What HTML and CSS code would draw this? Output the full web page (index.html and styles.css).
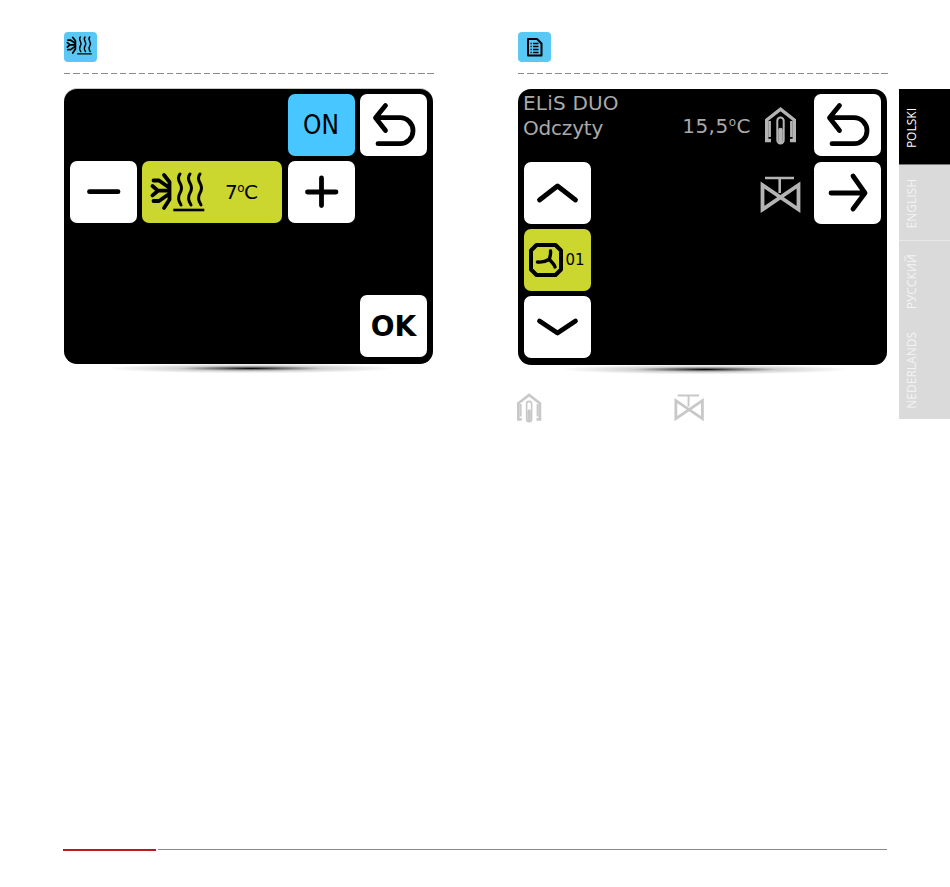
FILE: index.html
```html
<!DOCTYPE html>
<html lang="pl">
<head>
<meta charset="utf-8">
<title>ELiS DUO</title>
<link rel="stylesheet" href="styles.css">
</head>
<body>
<svg class="sprite" xmlns="http://www.w3.org/2000/svg">
  <symbol id="frost" viewBox="0 0 60 50">
    <g fill="none" stroke="#000" stroke-linecap="round" stroke-linejoin="round">
      <path stroke-width="3.800" d="M17 8l5.500 7v17.500L17 41M10 23.700h12.500M5.500 19l5.500 4.700-5.500 4.700M6.500 13.500h5.500l10 7M6.500 34h5.500l10-7"/>
      <path stroke-width="3" d="M33 7c-2.500 3-2 5.500 0 9s2.500 6 0 10-1.500 8 1 12M43 7c-2.500 3-2 5.500 0 9s2.500 6 0 10-1.500 8 1 12M53 7c-2.500 3-2 5.500 0 9s2.500 6 0 10-1.500 8 1 12"/>
      <path stroke-width="2.600" stroke-linecap="butt" d="M26.300 43h31"/>
    </g>
  </symbol>
  <symbol id="sensor" viewBox="0 0 32 38">
    <g fill="none" stroke="currentColor">
      <path stroke-width="3.400" d="M6 33.500H1.700V13L15.500 2.200 29.300 13v20.500H25"/>
      <path stroke-width="2.600" d="M4.600 14V30M26.400 14V30"/>
      <rect x="12.300" y="10.500" width="6.400" height="26" rx="3.200" stroke-width="2"/>
      <path stroke-width="4.500" stroke-linecap="round" d="M15.500 23v11"/>
    </g>
  </symbol>
  <symbol id="valve" viewBox="0 0 42 38">
    <g fill="none" stroke="currentColor" stroke-width="3.800">
      <path stroke-width="2.600" d="M5 2h29M19.700 2v15"/>
      <path d="M2.500 9L38.500 33.500V9L2.500 33.500z"/>
    </g>
  </symbol>
  <symbol id="back" viewBox="0 0 67 62">
    <path d="M25.500 11.500L15.500 23.700 25.500 36.500M16 23.700H40a13 13 0 0 1 0 26H18"/>
  </symbol>
</svg>
<div class="page">
  <div class="content">
    <section class="column">
      <div class="head-icon">
        <svg viewBox="-1.700 -3.600 70.200 63.800" width="33" height="30"><use href="#frost" width="60" height="50"/></svg>
      </div>
      <div class="dashes"></div>
      <div class="screen screen-left">
        <div class="btn btn-blue on cell-on">ON</div>
        <div class="btn cell-back">
          <svg class="ico"><use href="#back"/></svg>
        </div>
        <div class="btn cell-minus">
          <svg class="ico" viewBox="0 0 67 62"><path d="M19.500 30.700H48"/></svg>
        </div>
        <div class="btn-green cell-temp">
          <svg class="frost" width="60" height="50"><use href="#frost"/></svg>
          <span class="temp">7<sup>o</sup>C</span>
        </div>
        <div class="btn cell-plus">
          <svg class="ico" viewBox="0 0 67 62"><path d="M19.500 31H48M33.500 17V44.500"/></svg>
        </div>
        <div class="btn ok cell-ok">OK</div>
      </div>
      <div class="shadow"></div>
    </section>

    <section class="column">
      <div class="head-icon">
        <svg viewBox="0 0 33 30" width="33" height="30" fill="none" stroke="#000">
          <path d="M10 7h9l4.500 4.500V23.500H10z" stroke-width="2" stroke-linejoin="round"/>
          <path d="M12.500 11.500h1.200M15 11.500h5.500M12.500 14.500h1.200M15 14.500h5.500M12.500 17.500h1.200M15 17.500h5.500M12.500 20.500h1.200M15 20.500h5.500" stroke-width="1.300"/>
        </svg>
      </div>
      <div class="dashes"></div>
      <div class="screen screen-right">
        <div class="title cell-title">ELiS DUO<br><span class="title-sub">Odczyty</span></div>
        <div class="reading cell-reading">
          <span>15,5<sup>o</sup>C</span>
          <svg class="sensor" width="32" height="38"><use href="#sensor"/></svg>
        </div>
        <div class="btn cell-back">
          <svg class="ico"><use href="#back"/></svg>
        </div>
        <div class="btn cell-up">
          <svg class="ico" viewBox="0 0 67 62"><path d="M15.500 38L33.500 24 51.500 38"/></svg>
        </div>
        <svg class="valve cell-valve" width="42" height="38"><use href="#valve"/></svg>
        <div class="btn cell-next">
          <svg class="ico" viewBox="0 0 67 62"><path d="M17 31H50.500M39 14L51 31 39 47"/></svg>
        </div>
        <div class="btn-green cell-fan">
          <svg viewBox="0 0 34 34" width="34" height="34" fill="none" stroke="#000">
            <path d="M7.500 2H26.500L32 7.500V26.500L26.500 32H7.500L2 26.500V7.500z" stroke-width="4" stroke-linejoin="round"/>
            <path d="M20.300 16.500C21 13.500 22 11 21.500 8M19.800 16.500C16 19 12.500 19.500 8.500 19M20.300 16.500C23 19 25 21 26 24" stroke-width="3.400" stroke-linecap="round"/>
          </svg>
          <span class="fan-num">01</span>
        </div>
        <div class="btn cell-down">
          <svg class="ico" viewBox="0 0 67 62"><path d="M15.500 25L33.500 37 51.500 25"/></svg>
        </div>
      </div>
      <div class="shadow"></div>
      <div class="legend">
        <svg class="legend-sensor" width="25" height="30"><use href="#sensor"/></svg>
        <svg class="legend-valve" width="31" height="28"><use href="#valve"/></svg>
      </div>
    </section>
    <nav class="tabs">
      <a class="tab tab-polski"><span>POLSKI</span></a>
      <a class="tab tab-english"><span>ENGLISH</span></a>
      <a class="tab tab-russian"><span>РУССКИЙ</span></a>
      <a class="tab tab-dutch"><span>NEDERLANDS</span></a>
    </nav>
  </div>
  <footer class="rule">
    <div class="rule-red"></div>
    <div class="rule-grey"></div>
  </footer>
</div>
</body>
</html>
```
FILE: styles.css
```css
* { box-sizing: border-box; }
html, body { margin: 0; padding: 0; background: #fff; }
body { font-family: "DejaVu Sans", Verdana, sans-serif; }

.sprite { display: none; }

.page {
  display: flex;
  flex-direction: column;
  height: 887px;
  overflow: hidden;
}
.content {
  display: flex;
  flex: 1;
  padding: 32px 0 0 64px;
}
.column { width: 370px; margin-right: 84px; }
.column + .column { margin-right: 11px; }

.head-icon {
  width: 33px;
  height: 30px;
  background: #5ac8f5;
  border-radius: 4px;
  overflow: hidden;
}
.head-icon svg { display: block; }

.dashes {
  height: 1px;
  margin-top: 11px;
  background: repeating-linear-gradient(to right, #8c8c8c 0 6.500px, transparent 6.500px 9.320px);
}

.screen {
  display: grid;
  grid-template-columns: 67px 140px 67px 67px;
  grid-auto-rows: 62px;
  column-gap: 5.500px;
  width: 369px;
  margin-top: 15px;
  padding-left: 5.500px;
  background: #000;
  border-radius: 13px;
}
.screen-left {
  height: 275px;
  padding-top: 5px;
  row-gap: 5px;
  box-shadow: 0 -1px 0 #c8c8c8;
}
.screen-right {
  height: 276px;
  padding-top: 5.300px;
  row-gap: 5.400px;
}

.btn {
  display: flex;
  align-items: center;
  justify-content: center;
  background: #fff;
  border-radius: 7px;
  color: #000;
}
.btn-blue { background: #48c6ff; }
.btn-green {
  display: flex;
  align-items: center;
  background: #cbd62e;
  border-radius: 7px;
  color: #000;
}
.ico {
  display: block;
  width: 67px;
  height: 62px;
  fill: none;
  stroke: #000;
  stroke-width: 4.800;
  stroke-linecap: round;
  stroke-linejoin: round;
}

.on { font-size: 26px; font-stretch: condensed; }
.ok { font-weight: 700; font-size: 28px; }

.cell-on { grid-column: 3; grid-row: 1; }
.cell-back { grid-column: 4; grid-row: 1; }
.cell-minus { grid-column: 1; grid-row: 2; }
.cell-temp { grid-column: 2; grid-row: 2; }
.cell-plus { grid-column: 3; grid-row: 2; }
.cell-ok { grid-column: 4; grid-row: 4; }

.frost { display: block; margin-left: 5px; flex: none; }
.temp { margin-left: 18px; font-size: 20px; line-height: 1; letter-spacing: -0.6px; }
.temp sup, .reading sup { font-size: 0.6em; vertical-align: 0.55em; line-height: 0; }

.cell-title { grid-column: 1 / span 2; grid-row: 1; }
.title {
  color: #aaa;
  font-size: 20px;
  line-height: 25px;
  letter-spacing: 0.2px;
  margin: -3px 0 0 -0.500px;
  white-space: nowrap;
}
.title-sub { letter-spacing: -0.2px; }
.cell-reading {
  grid-column: 2 / span 2;
  grid-row: 1;
  display: flex;
  align-items: center;
  justify-content: flex-end;
  color: #aaa;
  font-size: 20px;
  white-space: nowrap;
}
.reading span { margin-top: 2px; letter-spacing: 0.5px; }
.sensor { display: block; margin: 2px 11.500px 0 14px; flex: none; color: #b4b4b4; }
.cell-up { grid-column: 1; grid-row: 2; }
.cell-next { grid-column: 4; grid-row: 2; }
.cell-valve {
  grid-column: 3;
  grid-row: 2;
  justify-self: end;
  align-self: center;
  margin: 5px 6.500px 0 0;
  color: #b4b4b4;
}
.cell-fan { grid-column: 1; grid-row: 3; padding-left: 5.500px; }
.cell-fan svg { display: block; flex: none; }
.cell-down { grid-column: 1; grid-row: 4; }
.fan-num { font-size: 15px; margin-left: 2.500px; }

.shadow {
  width: 290px;
  height: 11px;
  margin-left: 42px;
  background: radial-gradient(ellipse 50% 45% at 50% 40%, #000 0, rgba(0,0,0,.6) 20%, rgba(0,0,0,.18) 50%, rgba(0,0,0,0) 100%);
}

.legend {
  display: flex;
  align-items: center;
  margin-top: 17px;
}
.legend-sensor { display: block; margin-left: -1px; flex: none; color: #c8c8c8; }
.legend-valve { display: block; margin-left: 132px; flex: none; color: #c8c8c8; }

.tabs {
  display: flex;
  flex-direction: column;
  width: 51px;
  height: 330px;
  margin-top: 57px;
  flex: none;
  font-family: "Open Sans", sans-serif;
  font-size: 12px;
}
.tab {
  display: flex;
  align-items: flex-end;
  justify-content: flex-start;
  padding-left: 4px;
  background: #dadada;
  color: #f4f4f4;
}
.tab span { writing-mode: vertical-rl; transform: rotate(180deg); }
.tab-polski {
  height: 76px;
  padding-bottom: 16px;
  background: #000;
  color: #fff;
  border-bottom: 1px solid #777;
}
.tab-english {
  height: 76px;
  padding-bottom: 12px;
  border-bottom: 1px solid #e8e8e8;
}
.tab-russian { height: 89px; padding-bottom: 21px; }
.tab-dutch { flex: 1; padding-bottom: 10px; }

.rule {
  display: flex;
  align-items: flex-start;
  gap: 2px;
  padding: 0 63px 36px 63px;
}
.rule-red { width: 93px; height: 2px; background: #b81a14; }
.rule-grey { flex: 1; height: 1px; background: #8a8a8a; }
```
